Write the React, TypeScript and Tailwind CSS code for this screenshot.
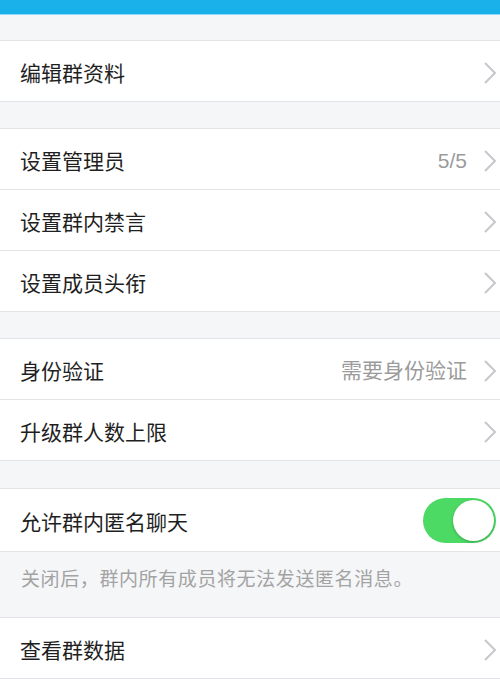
const font = "font-['Noto_Sans_CJK_SC','Noto_Sans',sans-serif]";

function Chevron() {
  return (
    <svg width="14" height="22" viewBox="0 0 14 22" className="shrink-0">
      <polyline points="2,1 12,11 2,21" fill="none" stroke="#c7c7cc" strokeWidth="2" />
    </svg>
  );
}

function Row({ title, value, last }: { title: string; value?: string; last?: boolean }) {
  return (
    <div className={last ? "" : "border-b border-[#e3e4e7]"}>
      <div className="flex h-[60px] items-center justify-between bg-white pl-5 pr-[3px] pt-[3px]">
        <span className="text-[21px] text-[#1f1f1f]">{title}</span>
        <div className="flex items-center gap-4">
          {value && (
            <span className="font-['Liberation_Sans','Noto_Sans_CJK_SC',sans-serif] text-[21px] text-[#9b9b9b]">
              {value}
            </span>
          )}
          <Chevron />
        </div>
      </div>
    </div>
  );
}

function Group({ children }: { children: React.ReactNode }) {
  return <div className="border-y border-[#e3e4e7] bg-white">{children}</div>;
}

export default function App() {
  return (
    <div className={`h-[679px] w-[500px] overflow-hidden bg-[#f5f6f8] ${font}`}>
      <div className="h-[15px] border-b border-[#8fd6f5] bg-[#1ab1eb]" />
      <div className="h-[25px]" />
      <Group>
        <Row title="编辑群资料" last />
      </Group>
      <div className="h-[26px]" />
      <Group>
        <Row title="设置管理员" value="5/5" />
        <Row title="设置群内禁言" />
        <Row title="设置成员头衔" last />
      </Group>
      <div className="h-[26px]" />
      <Group>
        <Row title="身份验证" value="需要身份验证" />
        <Row title="升级群人数上限" last />
      </Group>
      <div className="h-[27px]" />
      <Group>
        <div className="flex h-[62px] items-center justify-between bg-white pl-5 pr-1">
          <span className="pt-[3px] text-[21px] text-[#1f1f1f]">允许群内匿名聊天</span>
          <div className="flex h-[45px] w-[73px] items-center justify-end rounded-full bg-[#4cd964] p-[2px]">
            <div className="h-[41px] w-[41px] rounded-full bg-white shadow-[0_1px_3px_rgba(0,0,0,0.25)]" />
          </div>
        </div>
      </Group>
      <div className="flex h-[65px] items-center pb-[12px] pl-[21px]">
        <span className="text-[19px] tracking-[0.6px] text-[#a3a3a3]">关闭后，群内所有成员将无法发送匿名消息。</span>
      </div>
      <Group>
        <Row title="查看群数据" last />
      </Group>
    </div>
  );
}
